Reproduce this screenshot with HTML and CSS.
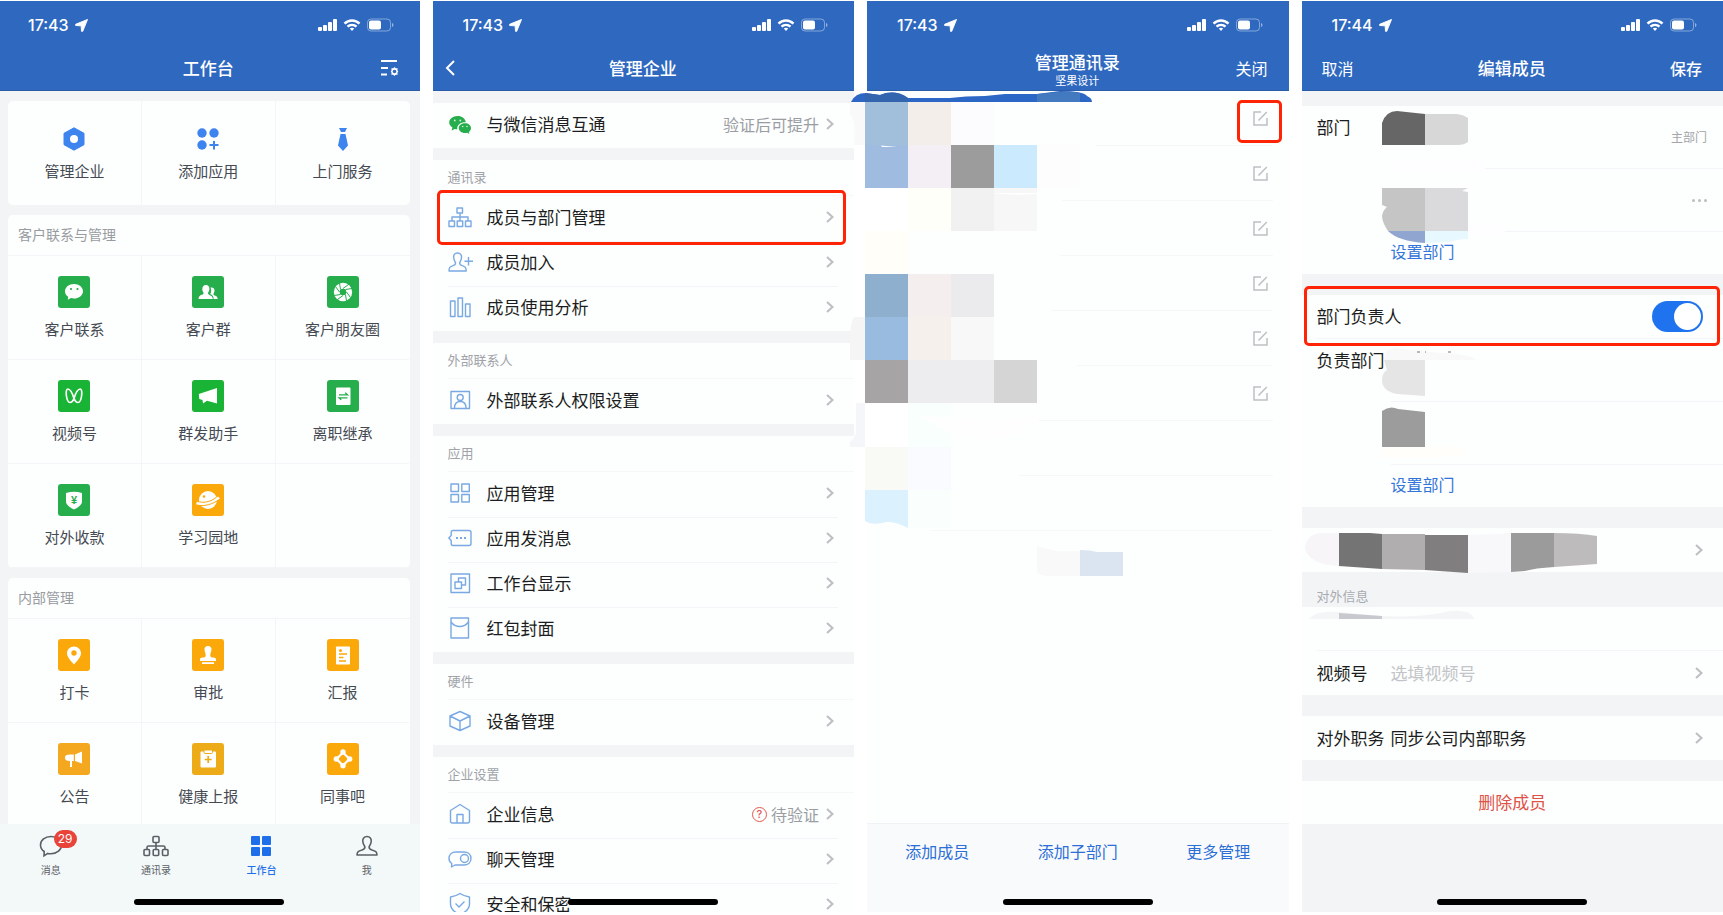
FILE: index.html
```html
<!DOCTYPE html>
<html lang="zh-CN">
<head>
    <meta charset="UTF-8">
    <title>企业微信 部门负责人设置</title>
    <link rel="stylesheet" href="styles.css">
</head>
<body>
    <!-- shared icons -->
    <svg class="sprite" aria-hidden="true">
        <symbol id="arrow" viewBox="0 0 14 14"><path d="M13.500.500 8.300 13.300H7L6.600 7.400.700 7V5.700z" fill="#fff" stroke="#fff" stroke-linejoin="round"/></symbol>
        <symbol id="signals" viewBox="0 0 76 14">
            <g fill="#fff">
                <rect x="0" y="9" width="4" height="4" rx="1"/>
                <rect x="5" y="7" width="4" height="6" rx="1"/>
                <rect x="10" y="4" width="4" height="9" rx="1"/>
                <rect x="15" y="1" width="4" height="12" rx="1"/>
            </g>
            <g fill="none" stroke="#fff" stroke-width="2.4">
                <path d="M26.5 5.600a10.500 10.500 0 0 1 15 0M29.500 8.700a6.400 6.400 0 0 1 9 0"/>
            </g>
            <path d="M31.800 10.600a3.400 3.400 0 0 1 4.400 0L34 13z" fill="#fff"/>
            <rect x="49.500" y="1" width="23" height="12" rx="3.500" fill="none" stroke="#fff" stroke-opacity=".4"/>
            <rect x="51" y="2.500" width="12" height="9" rx="2" fill="#fff"/>
            <path d="M74 5v4q1.500-.5 1.500-2T74 5z" fill="#fff" fill-opacity=".5"/>
        </symbol>
        <symbol id="chevron" viewBox="0 0 8 12"><path d="m1 1 5.500 5L1 11" fill="none" stroke="#bcbec2" stroke-width="2"/></symbol>
        <symbol id="edit" viewBox="0 0 15 15"><path d="M8 1H1v13h13V7M5.500 9.500 13.800 1" fill="none" stroke="#bdc0c3" stroke-width="1.500"/></symbol>
    </svg>

    <main class="board">
        <!-- workbench -->
        <section class="phone">
            <header class="topbar">
                <div class="status"><span class="time">17:43</span><svg class="loc"><use href="#arrow"/></svg><svg class="signals"><use href="#signals"/></svg></div>
                <div class="nav">
                    <h1>工作台</h1>
                    <button class="nav-right" aria-label="设置">
                        <svg width="18" height="16" viewBox="0 0 18 16" fill="none" stroke="#fff" stroke-width="2"><path d="M0 1h16M0 8h7M0 14.500h6"/><path d="m13.500 7 1.200 1.300 2-.1-.3 2 .9 1.300-.9 1.300.3 2-2-.1-1.200 1.300-1.200-1.300-2 .1.300-2-.9-1.300.9-1.300-.3-2 2 .1z" fill="#fff" stroke="none"/><circle cx="13.500" cy="11.500" r="1.800" fill="#2f69bf" stroke="none"/></svg>
                    </button>
                </div>
            </header>
            <div class="content home">
                <div class="card quick">
                    <div class="cells">
                        <button class="cell"><svg class="mark" viewBox="0 0 24 24"><path d="M12 .8 22 6.300v11.400L12 23.200 2 17.700V6.300z" fill="#3d84ef" stroke="#3d84ef" stroke-linejoin="round"/><circle cx="12" cy="12" r="4" fill="#fff"/></svg>管理企业</button>
                        <button class="cell"><svg class="mark" viewBox="0 0 24 24" fill="#3d84ef"><circle cx="6" cy="6" r="4.700"/><circle cx="18" cy="6" r="4.700"/><circle cx="6" cy="18" r="4.700"/><path d="M17 14h2v3h3.500v2H19v3.500h-2V19h-3.500v-2H17z"/></svg>添加应用</button>
                        <button class="cell"><svg class="mark" viewBox="0 0 24 24" fill="#3d84ef"><path d="M8 1h8l-2 4h-4zM9.500 7h5L17 18.500 12 24l-5-5.500z"/></svg>上门服务</button>
                    </div>
                </div>
                <div class="card">
                    <h2>客户联系与管理</h2>
                    <div class="cells">
                        <button class="cell"><svg class="tile green" viewBox="0 0 32 32"><path d="M16 8c5 0 9 3.200 9 7.200s-4 7.300-9 7.300c-1 0-2-.1-3-.4L9.800 23.800l.4-3C8.200 19.500 7 17.500 7 15.200 7 11.200 11 8 16 8z" fill="#fff"/><circle cx="13" cy="13" r="1.100" fill="#26ad4c"/><circle cx="19.500" cy="13" r="1.100" fill="#26ad4c"/></svg>客户联系</button>
                        <button class="cell"><svg class="tile green" viewBox="0 0 32 32" fill="#fff"><path d="M14 9c2.400 0 3.600 1.800 3.400 4.200-.1 1.600-.8 2.500-1.300 3.300-.3 1.400.3 1.900 1.500 2.400 2 .8 3 1.600 3.200 4.100H6.500c.2-2.700 1.200-3.400 3.300-4.200 1.300-.5 2-.9 1.700-2.300-.5-.8-1.200-1.700-1.200-3.300C10.200 10.800 11.600 9 14 9z"/><path d="M18.500 11.500c3-.5 4.200 1.300 4 3.500-.1 1.300-.6 2-1 2.700-.2 1.100.3 1.400 1.300 1.800 1.900.8 2.700 1.500 2.900 3.500h-4c-.2-2.600-1.300-3.900-3.500-4.900 1.200-2 1.400-4.500.3-6.600z"/></svg>客户群</button>
                        <button class="cell"><svg class="tile green" viewBox="0 0 32 32"><circle cx="16" cy="16" r="9.200" fill="#fff"/><circle cx="16" cy="16" r="3.300" fill="#26ad4c"/><path d="m16 12.500 5.500-4M18.500 13.500l6.600-1M19.500 16l4 5.500M18.500 18.500l1 6.500M16 19.500l-5.500 4M13.500 18.500l-6.600 1M12.500 16l-4-5.500M13.500 13.500l-1-6.500" stroke="#26ad4c" stroke-width="1"/></svg>客户朋友圈</button>
                        <button class="cell"><svg class="tile bright" viewBox="0 0 32 32"><path d="M16 18.500C14.500 13.500 12.300 9 9.800 9c-3 0-1.500 13.500 2.200 13.500 1.600 0 3-1.600 4-4C17.500 13.500 19.700 9 22.200 9c3 0 1.500 13.500-2.200 13.500-1.600 0-3-1.600-4-4z" fill="none" stroke="#fff" stroke-width="1.700"/></svg>视频号</button>
                        <button class="cell"><svg class="tile bright" viewBox="0 0 32 32"><path d="M25 8v15.500l-10-2.800L11 23.500l-.5-3.500-3.200-1-.5-5z" fill="#fff"/></svg>群发助手</button>
                        <button class="cell"><svg class="tile green" viewBox="0 0 32 32"><rect x="9" y="7.500" width="14.500" height="17.500" rx="1" fill="#fff"/><path d="M12 14.800h8.500l-2.300-2M20.500 17.800H12l2.300 2" fill="none" stroke="#26ad4c" stroke-width="1.300"/></svg>离职继承</button>
                        <button class="cell"><svg class="tile green" viewBox="0 0 32 32"><path d="M8 9q8-2.500 16 0v8.500c0 3.500-4 6-8 8-4-2-8-4.500-8-8z" fill="#fff"/><text x="16" y="20" class="yen">¥</text></svg>对外收款</button>
                        <button class="cell"><svg class="tile orange" viewBox="0 0 32 32"><circle cx="16" cy="16" r="9" fill="#fff"/><path d="M4.500 19C12 22 22 18 27 13.500" fill="none" stroke="#fff" stroke-width="2.600"/><path d="M7.500 17.800C13 19.500 21 16.500 24.500 13" fill="none" stroke="#fba80a" stroke-width="1"/><path d="M6 21.300C13 22.500 21 19.800 26 16.300" fill="none" stroke="#fba80a" stroke-width="1"/><circle cx="12" cy="12.500" r="1.300" fill="#fba80a"/></svg>学习园地</button>
                        <span class="cell"></span>
                    </div>
                </div>
                <div class="card">
                    <h2>内部管理</h2>
                    <div class="cells">
                        <button class="cell"><svg class="tile orange" viewBox="0 0 32 32"><path d="M16 7.500c4 0 7 3 7 6.800 0 4.200-4.500 8.200-7 11.200-2.500-3-7-7-7-11.200 0-3.800 3-6.800 7-6.800z" fill="#fff"/><circle cx="16" cy="14" r="2.700" fill="#fba80a"/></svg>打卡</button>
                        <button class="cell"><svg class="tile orange" viewBox="0 0 32 32" fill="#fff"><path d="M16 7c2.400 0 3.700 1.600 3.500 4-.2 2-1.200 3-1.200 5.500 0 1.500 1 2 3 2 2.400 0 3 .8 2.700 3.500H8c-.3-2.700.3-3.500 2.700-3.500 2 0 3-.5 3-2 0-2.500-1-3.500-1.200-5.500-.2-2.400 1.100-4 3.500-4z"/><path d="M10 23.300h12V25H10z"/></svg>审批</button>
                        <button class="cell"><svg class="tile orange" viewBox="0 0 32 32"><rect x="9" y="7.500" width="14" height="18" rx=".8" fill="#fff"/><circle cx="13.500" cy="11.500" r="1.500" fill="#fba80a"/><path d="M12 15h8M12 18.500h4.500M12 22h7" stroke="#fba80a" stroke-width="1.300"/></svg>汇报</button>
                        <button class="cell"><svg class="tile amber" viewBox="0 0 32 32" fill="#fff"><path d="M24 8.500v12l-7-2.500v-6.500zM15.800 11.500V18H14v6h-2v-6c-3.500 0-5-1-5-3.300 0-2.200 1.500-3.200 5-3.200z"/></svg>公告</button>
                        <button class="cell"><svg class="tile mustard" viewBox="0 0 32 32"><rect x="8.500" y="8.500" width="15.500" height="16" rx="1" fill="#fff"/><path d="M12 7h8.500v2.500q0 1-1 1h-6.500q-1 0-1-1z" fill="#fff" stroke="#ecab17"/><path d="M16.200 13v7M12.700 16.500h7" stroke="#ecab17" stroke-width="1.700"/></svg>健康上报</button>
                        <button class="cell"><svg class="tile orange" viewBox="0 0 32 32"><path d="m16 9.500 6.500 6.500-6.500 6.500L9.500 16z" fill="none" stroke="#fff" stroke-width="2.200"/><g fill="#fff"><circle cx="16" cy="9" r="2.700"/><circle cx="22.700" cy="16" r="2.700"/><circle cx="16" cy="22.700" r="2.700"/><circle cx="9.300" cy="16" r="2.700"/></g></svg>同事吧</button>
                    </div>
                </div>
            </div>
            <nav class="tabbar">
                <a href="#"><span class="tab-icon"><svg width="24" height="22" viewBox="0 0 24 22" fill="none" stroke="#5b6066" stroke-width="1.600"><path d="M12 1.500c6 0 10.500 3.700 10.500 8.500S18 18.800 12 18.800c-1.200 0-2.300-.1-3.300-.4L5 20.800l.2-4.300C2.800 14.900 1.500 12.600 1.500 10 1.500 5.200 6 1.500 12 1.500z"/></svg><b class="badge">29</b></span>消息</a>
                <a href="#"><span class="tab-icon"><svg width="26" height="22" viewBox="0 0 26 22" fill="none" stroke="#5b6066" stroke-width="1.600"><rect x="10" y="1.500" width="6" height="6" rx="1"/><path d="M13 8v3M4 14v-1.500q0-1.500 1.500-1.500h15q1.500 0 1.500 1.500V14M13 11v3"/><rect x="1" y="14.500" width="5.500" height="6" rx="1"/><rect x="10.200" y="14.500" width="5.500" height="6" rx="1"/><rect x="19.500" y="14.500" width="5.500" height="6" rx="1"/></svg></span>通讯录</a>
                <a href="#" class="active"><span class="tab-icon"><svg width="20" height="20" viewBox="0 0 20 20" fill="#1f6feb"><rect width="9" height="9" rx="1"/><rect x="11" width="9" height="9" rx="1"/><rect y="11" width="9" height="9" rx="1"/><rect x="11" y="11" width="9" height="9" rx="1"/></svg></span>工作台</a>
                <a href="#"><span class="tab-icon"><svg width="24" height="22" viewBox="0 0 24 22" fill="none" stroke="#5b6066" stroke-width="1.600" stroke-linejoin="round"><path d="M12 1.500c3 0 4.500 2.200 4.200 5-.2 2.400-1.200 3.500-2 5-.5 1.800.5 2.700 2.800 3.500 3.500 1 5 1.800 5 5H2c0-3.200 1.500-4 5-5 2.300-.8 3.300-1.700 2.800-3.500-.8-1.500-1.800-2.600-2-5-.3-2.800 1.200-5 4.200-5z"/></svg></span>我</a>
            </nav>
            <div class="home-bar"></div>
        </section>

        <!-- company management -->
        <section class="phone">
            <header class="topbar">
                <div class="status"><span class="time">17:43</span><svg class="loc"><use href="#arrow"/></svg><svg class="signals"><use href="#signals"/></svg></div>
                <div class="nav">
                    <button class="nav-back" aria-label="返回"><svg width="10" height="16" viewBox="0 0 10 16"><path d="M9 1 2 8l7 7" fill="none" stroke="#fff" stroke-width="2"/></svg></button>
                    <h1>管理企业</h1>
                </div>
            </header>
            <div class="content manage">
                <div class="group">
                    <a class="row" href="#"><svg class="row-icon" viewBox="0 0 24 24" fill="#26ad4c"><path d="M9.500 4c4.500 0 7.900 2.700 8.300 6.200-4.800-.3-8.600 2.400-8.600 6.300l.1.800c-1 0-1.800-.1-2.500-.4L3.600 18.500l.8-2.900C2.600 14.500 1.200 12.600 1.200 10.600 1.200 7 4.800 4 9.500 4z"/><path d="M17 11.200c3.500 0 6 2.100 6 5 0 1.500-.8 2.800-2.200 3.800l.5 2-2.200-1.200c-.7.200-1.400.3-2.100.3-3.500 0-6.300-2.200-6.300-5s2.800-4.900 6.300-4.900z"/><g fill="#fff" fill-opacity=".8"><circle cx="6.800" cy="8.500" r=".9"/><circle cx="12.300" cy="8.500" r=".9"/><circle cx="14.700" cy="14.500" r=".8"/><circle cx="19" cy="14.500" r=".8"/></g></svg><span class="row-text">与微信消息互通</span><span class="row-value">验证后可提升</span><svg class="chev"><use href="#chevron"/></svg></a>
                </div>
                <div class="group">
                    <h2>通讯录</h2>
                    <a class="row marked" href="#"><svg class="row-icon" viewBox="0 0 24 24"><rect x="9" y="3" width="5.500" height="5"/><path d="M12 8v4M4 16v-4h16v4M12 12v4"/><rect x="1" y="16" width="5.500" height="5.500"/><rect x="9.200" y="16" width="5.500" height="5.500"/><rect x="17.500" y="16" width="5.500" height="5.500"/></svg><span class="row-text">成员与部门管理</span><svg class="chev"><use href="#chevron"/></svg></a>
                    <a class="row" href="#"><svg class="row-icon" viewBox="0 0 24 24"><path d="M9.500 3c3 0 4.300 2 4 4.800-.2 2.400-1 3.300-1.800 4.700-.4 1.800.5 2.500 2.500 3.200 3 1 4 1.700 4 5.300H1c0-3.600 1-4.300 4-5.300 2-.7 2.900-1.400 2.500-3.200-.8-1.400-1.600-2.300-1.800-4.700C5.300 5 6.600 3 9.500 3zM20.500 7v8.500M16.500 11.200H25"/></svg><span class="row-text">成员加入</span><svg class="chev"><use href="#chevron"/></svg></a>
                    <a class="row" href="#"><svg class="row-icon" viewBox="0 0 24 24"><rect x="2.500" y="6" width="4.500" height="15.500"/><rect x="10" y="3" width="4.500" height="18.500"/><rect x="17.500" y="9" width="4.500" height="12.500"/></svg><span class="row-text">成员使用分析</span><svg class="chev"><use href="#chevron"/></svg></a>
                </div>
                <div class="group">
                    <h2>外部联系人</h2>
                    <a class="row" href="#"><svg class="row-icon" viewBox="0 0 24 24"><rect x="3" y="3.500" width="18.500" height="17"/><circle cx="12.200" cy="9.500" r="3"/><path d="M6.500 20c0-4.500 2.200-6.500 5.700-6.500s5.800 2 5.800 6.500"/></svg><span class="row-text">外部联系人权限设置</span><svg class="chev"><use href="#chevron"/></svg></a>
                </div>
                <div class="group">
                    <h2>应用</h2>
                    <a class="row" href="#"><svg class="row-icon" viewBox="0 0 24 24"><rect x="3" y="3" width="7.500" height="7.500"/><rect x="13.800" y="3" width="7.500" height="7.500"/><rect x="3" y="13.500" width="7.500" height="7.500"/><rect x="13.800" y="13.500" width="7.500" height="7.500"/></svg><span class="row-text">应用管理</span><svg class="chev"><use href="#chevron"/></svg></a>
                    <a class="row" href="#"><svg class="row-icon" viewBox="0 0 24 24"><path d="M5 4.500h16q2 0 2 2v11q0 2-2 2H5q-1.800 0-1.800-2v-3L.8 12l2.400-2.500v-3q0-2 1.800-2z"/><path d="M8 12h2M12 12h2M16 12h2" stroke-width="2"/></svg><span class="row-text">应用发消息</span><svg class="chev"><use href="#chevron"/></svg></a>
                    <a class="row" href="#"><svg class="row-icon" viewBox="0 0 24 24"><rect x="3" y="3" width="18.500" height="18.500"/><rect x="7" y="11" width="6.500" height="6.500"/><path d="M10.500 11V7H17.500v7h-4"/></svg><span class="row-text">工作台显示</span><svg class="chev"><use href="#chevron"/></svg></a>
                    <a class="row" href="#"><svg class="row-icon" viewBox="0 0 24 24"><rect x="3" y="2" width="17.500" height="20"/><path d="M3 6c4.500 6 13 6 17.500 0"/></svg><span class="row-text">红包封面</span><svg class="chev"><use href="#chevron"/></svg></a>
                </div>
                <div class="group">
                    <h2>硬件</h2>
                    <a class="row" href="#"><svg class="row-icon" viewBox="0 0 24 24"><path d="m12 2.500 10 4.500v10l-10 4.500L2 17V7zM2 7l10 5 10-5M12 12v9.500"/></svg><span class="row-text">设备管理</span><svg class="chev"><use href="#chevron"/></svg></a>
                </div>
                <div class="group">
                    <h2>企业设置</h2>
                    <a class="row" href="#"><svg class="row-icon" viewBox="0 0 24 24"><path d="M12 2.500 21.500 8.500V19q0 2-2 2H4.500q-2 0-2-2V8.500zM9 21v-8.500h6V21"/></svg><span class="row-text">企业信息</span><i class="warn">?</i><span class="row-value">待验证</span><svg class="chev"><use href="#chevron"/></svg></a>
                    <a class="row" href="#"><svg class="row-icon" viewBox="0 0 24 24"><path d="M8 5h8c4 0 7 2.500 7 6.500S20 18 16 18H7l-3.500 2 .3-3.500C2 15.500 1 13.500 1 11.500 1 7.500 4 5 8 5z"/><circle cx="16.500" cy="11.500" r="4"/></svg><span class="row-text">聊天管理</span><svg class="chev"><use href="#chevron"/></svg></a>
                    <a class="row" href="#"><svg class="row-icon" viewBox="0 0 24 24"><path d="M12 1.500c3 2 6 3 9.500 3.500v7c0 5-4.500 8.500-9.500 10.500-5-2-9.500-5.500-9.500-10.500V5C6 4.500 9 3.500 12 1.500z"/><path d="m7.500 11.500 3.500 3.500 5.500-5.500"/></svg><span class="row-text">安全和保密</span><svg class="chev"><use href="#chevron"/></svg></a>
                </div>
            </div>
            <div class="home-bar"></div>
        </section>

        <!-- contacts -->
        <section class="phone">
            <header class="topbar">
                <div class="status"><span class="time">17:43</span><svg class="loc"><use href="#arrow"/></svg><svg class="signals"><use href="#signals"/></svg></div>
                <div class="nav">
                    <h1>管理通讯录<small>坚果设计</small></h1>
                    <button class="nav-right">关闭</button>
                </div>
            </header>
            <div class="content contacts">
                <div class="entry"><button class="edit-btn marked" aria-label="编辑"><svg><use href="#edit"/></svg></button></div>
                <div class="entry"><button class="edit-btn" aria-label="编辑"><svg><use href="#edit"/></svg></button></div>
                <div class="entry"><button class="edit-btn" aria-label="编辑"><svg><use href="#edit"/></svg></button></div>
                <div class="entry"><button class="edit-btn" aria-label="编辑"><svg><use href="#edit"/></svg></button></div>
                <div class="entry"><button class="edit-btn" aria-label="编辑"><svg><use href="#edit"/></svg></button></div>
                <div class="entry"><button class="edit-btn" aria-label="编辑"><svg><use href="#edit"/></svg></button></div>
                <div class="entry"></div>
                <div class="entry"></div>
            </div>
            <div class="actions">
                <button>添加成员</button>
                <button>添加子部门</button>
                <button>更多管理</button>
            </div>
            <div class="home-bar"></div>
            <!-- blurred names -->
            <svg class="mosaic contacts-mosaic" width="300" height="500" viewBox="850 90 300 500" aria-hidden="true">
                <path d="M867 103H1095V150H1062V215H1015V250H1060V262H1051V320H1062L1077 362V375H1050L1040 405H930V440H1019V480L930 525V540H867z" fill="#fdfefe"/>
                <path d="M851 102Q855 93 866 93L880 95Q895 89 908 98H950Q965 96 985 96L1005 94H1037L1060 91Q1083 91 1087 96Q1092 98 1092 102z" fill="#2d67c6"/>
                <path d="M865 93 880 95Q895 89 908 98V102H865z" fill="#3265ae"/>
                <path d="M1037 94 1060 92Q1073 91 1080 93V102H1037z" fill="#4279bf"/>
                <path d="M850 102h15v43h-11q2-28-4-30z" fill="#f9f9f9"/>
                <path d="M855 317h10v43h-15v-20q0-20 5-23z" fill="#f5f5f5"/>
                <path d="M856 403h9v44h-15v-5q6-4 6-12z" fill="#f5f6f9"/>
                <g shape-rendering="crispEdges">
                    <path d="M865 102h43v43h-43z" fill="#a1bfda"/>
                    <path d="M908 102h43v43h-43z" fill="#f3eee9"/>
                    <path d="M951 102h43v43h-43z" fill="#fcfbfe"/>
                    <path d="M865 145h43v43h-43z" fill="#9fbbe0"/>
                    <path d="M908 145h43v43h-43z" fill="#f3eff4"/>
                    <path d="M951 145h43v43h-43z" fill="#9c9c9c"/>
                    <path d="M994 145h43v43h-43z" fill="#cbeafe"/>
                    <path d="M1037 145h43v43h-43z" fill="#fefdfe"/>
                    <path d="M865 188h43v43h-43z" fill="#ffffff"/>
                    <path d="M908 188h43v43h-43z" fill="#fffffa"/>
                    <path d="M951 188h43v43h-43z" fill="#f1f1f2"/>
                    <path d="M994 188h43v43h-43z" fill="#f7f7f8"/>
                    <path d="M865 231h43v43h-43z" fill="#fffef9"/>
                    <path d="M865 274h43v43h-43z" fill="#8eafcd"/>
                    <path d="M908 274h43v43h-43z" fill="#f4efee"/>
                    <path d="M951 274h43v43h-43z" fill="#ebebee"/>
                    <path d="M865 317h43v43h-43z" fill="#99bbe0"/>
                    <path d="M908 317h43v43h-43z" fill="#f6f0ec"/>
                    <path d="M951 317h43v43h-43z" fill="#f8f8f8"/>
                    <path d="M865 360h43v43h-43z" fill="#a6a4a5"/>
                    <path d="M908 360h86v43h-86z" fill="#ededef"/>
                    <path d="M994 360h43v43h-43z" fill="#d5d5d5"/>
                    <path d="M865 403h43v44h-43z" fill="#ffffff"/>
                    <path d="M908 403h43v44h-43z" fill="#f9fffd"/>
                    <path d="M865 447h43v43h-43z" fill="#f9faf5"/>
                    <path d="M908 447h43v43h-43z" fill="#fafbff"/>
                    <path d="M908 490h43v38h-43z" fill="#fafffe"/>
                </g>
                <path d="M881 145.500 897 147 882 147z" fill="#fff"/>
                <path d="M992 193h45v1q-25 2-45-1z" fill="#fff"/>
                <path d="M920 416q80 4 125 0-30 24-60 24t-65-24z" fill="#fefefe"/>
                <path d="M865 490h43v38q-13-7-21-6-15 4-22-1z" fill="#dcf1fe"/>
                <path d="M1037 546q11 3 20 5h23v25h-34q-6-1-9-3z" fill="#f9f9f9"/>
                <path d="M1080 550q10 0 17 2h26v24h-43z" fill="#dbe5f1"/>
            </svg>
        </section>

        <!-- edit member -->
        <section class="phone">
            <header class="topbar">
                <div class="status"><span class="time">17:44</span><svg class="loc"><use href="#arrow"/></svg><svg class="signals"><use href="#signals"/></svg></div>
                <div class="nav">
                    <button class="nav-left">取消</button>
                    <h1>编辑成员</h1>
                    <button class="nav-right save">保存</button>
                </div>
            </header>
            <form class="content member" onsubmit="return false;">
                <div class="dept">
                    <span class="dept-label">部门</span>
                    <div class="dept-list">
                        <div class="dept-item"><small>主部门</small></div>
                        <div class="dept-item"><button class="more" aria-label="更多"><i></i><i></i><i></i></button></div>
                        <a href="#" class="set-dept">设置部门</a>
                    </div>
                </div>
                <div class="field switch-field marked">
                    <label for="leader">部门负责人</label>
                    <input type="checkbox" id="leader" class="switch" checked>
                </div>
                <div class="dept">
                    <span class="dept-label">负责部门</span>
                    <div class="dept-list">
                        <div class="dept-item"></div>
                        <div class="dept-item"></div>
                        <a href="#" class="set-dept">设置部门</a>
                    </div>
                </div>
                <div class="field"><svg class="chev"><use href="#chevron"/></svg></div>
                <h2>对外信息</h2>
                <div class="field flush lined"></div>
                <div class="field flush">
                    <label for="channel">视频号</label>
                    <input type="text" id="channel" placeholder="选填视频号">
                    <svg class="chev"><use href="#chevron"/></svg>
                </div>
                <div class="field">
                    <label for="job">对外职务</label>
                    <input type="text" id="job" value="同步公司内部职务">
                    <svg class="chev"><use href="#chevron"/></svg>
                </div>
                <button class="delete">删除成员</button>
            </form>
            <div class="home-bar"></div>
            <!-- blurred department names -->
            <svg class="mosaic member-mosaic" width="300" height="530" viewBox="1302 100 300 530" aria-hidden="true">
                <path d="M1390 160H1485V172H1390zM1390 225H1505V235H1390z" fill="#fefdff"/>
                <path d="M1382 145V123Q1386 111 1397 111L1425 114V145z" fill="#666"/>
                <path d="M1425 114H1457Q1464 115 1468 118V142Q1464 145 1458 145H1425z" fill="#d7d7d7"/>
                <path d="M1382 188H1425V231H1388Q1382 222 1382 216 1383 210 1387 207L1382 205z" fill="#c5c5c6"/>
                <path d="M1425 188H1468L1462 191 1468 192V231H1425z" fill="#dad9dc"/>
                <path d="M1388 231H1425V243Q1398 241 1388 231z" fill="#91a5d1"/>
                <path d="M1425 231H1468V239Q1458 239 1450 242L1425 243z" fill="#e7f8ff"/>
                <path d="M1384 360 1386 352Q1394 345 1402 349L1440 353Q1470 354 1476 360z" fill="#f9f9f9"/>
                <path d="M1417 352h3M1425 352h1M1448 352h3" stroke="#777"/>
                <path d="M1384 360H1425V396L1397 394Q1382 391 1382 380 1382 373 1387 370z" fill="#e5e5e5"/>
                <path d="M1382 447V411Q1390 405 1398 409L1425 412V447z" fill="#9c9c9c"/>
                <path d="M1382 447H1465V455Q1425 460 1382 457z" fill="#fffefa"/>
                <path d="M1339 533H1320Q1306 535 1305 548 1308 564 1339 566z" fill="#f7f5f7"/>
                <path d="M1339 533H1370L1382 534V569L1339 566z" fill="#747474"/>
                <path d="M1382 534H1425V570L1382 569z" fill="#b0aeaf"/>
                <path d="M1425 535H1468V573L1425 570z" fill="#807e7e"/>
                <path d="M1468 535 1500 534 1511 532V572L1468 573z" fill="#f8f8fb"/>
                <path d="M1511 533H1554V567Q1535 568 1525 571L1511 572z" fill="#9b9b9b"/>
                <path d="M1554 533Q1580 533 1597 536V564L1554 567z" fill="#bdbbbc"/>
                <path d="M1309 619Q1316 610 1339 612L1382 616Q1425 618 1450 611 1470 609 1475 619z" fill="#f3f5f7"/>
                <path d="M1339 613 1382 616V619H1339z" fill="#c8c9ce"/>
            </svg>
        </section>
    </main>
</body>
</html>
```

FILE: styles.css
```css
* {
    box-sizing: border-box;
}

body {
    margin: 0;
    background: #fff;
    color: #1b1d20;
    font-family: "Noto Sans CJK SC", sans-serif;
    font-size: 17px;
    line-height: 24px;
    overflow: hidden;
}

button,
input {
    padding: 0;
    border: none;
    background: none;
    color: inherit;
    font: inherit;
}

a {
    color: inherit;
    text-decoration: none;
}

h1,
h2 {
    margin: 0;
    font-weight: normal;
}

.sprite {
    position: absolute;
    width: 0;
    height: 0;
}

.board {
    display: grid;
    grid-template-columns: repeat(4, 1fr);
    gap: 13px;
    height: 100vh;
    margin-left: -2px;
    padding: 1px 0 3px;
}

.phone {
    position: relative;
    display: flex;
    flex-direction: column;
    min-width: 0;
    min-height: 0;
    background: #f2f4f6;
}

.content {
    flex: 1;
    min-height: 0;
    overflow: hidden;
}

/* top bar */
.topbar {
    background: #2f69bf;
    border-bottom: 1px solid #2a5ca8;
    color: #fff;
}

.status {
    display: flex;
    align-items: center;
    height: 48px;
    padding: 0 26px 0 30px;
}

.time {
    font-family: Inter, sans-serif;
    font-size: 16px;
    font-weight: 500;
}

.loc {
    width: 13px;
    height: 13px;
    margin-left: 6px;
}

.signals {
    width: 76px;
    height: 14px;
    margin-left: auto;
}

.nav {
    display: grid;
    grid-template-columns: 1fr auto 1fr;
    align-items: center;
    height: 41px;
    padding: 0 21px 3px 20px;
}

.nav h1 {
    grid-column: 2;
    grid-row: 1;
    font-size: 17px;
    font-weight: 500;
    text-align: center;
}

.nav h1 small {
    display: block;
    font-size: 11px;
    font-weight: 400;
    line-height: 13px;
}

.nav button {
    grid-row: 1;
    font-size: 16px;
}

.nav button svg {
    display: block;
}

.nav-left,
.nav-back {
    grid-column: 1;
    justify-self: start;
}

.nav-back {
    margin-left: -8px;
}

.nav-right {
    grid-column: 3;
    justify-self: end;
}

.save {
    font-weight: 500;
}

/* workbench */
.home {
    display: flex;
    flex-direction: column;
    gap: 10px;
    padding: 10px 10px 0;
}

.card {
    flex: none;
    overflow: hidden;
    background: #fdfefe;
    border-radius: 5px;
}

.card h2 {
    padding: 7px 10px 9px;
    border-bottom: 1px solid #f3f6f9;
    color: #989ba0;
    font-size: 14px;
}

.cells {
    display: grid;
    grid-template-columns: repeat(3, 1fr);
}

.cell {
    display: flex;
    flex-direction: column;
    align-items: center;
    height: 104px;
    padding-top: 20px;
    border-right: 1px solid #f3f6f9;
    border-bottom: 1px solid #f3f6f9;
    color: #454a52;
    font-size: 15px;
    line-height: 20px;
}

.cell:nth-child(3n) {
    border-right: none;
}

.quick .cell {
    padding-top: 26px;
    border-bottom: none;
}

.mark {
    width: 24px;
    height: 24px;
    margin-bottom: 10px;
}

.tile {
    width: 32px;
    height: 32px;
    margin-bottom: 11px;
    border-radius: 3px;
}

.green {
    background: #26ad4c;
}

.bright {
    background: #19b335;
}

.orange {
    background: #fba80a;
}

.amber {
    background: #f3a81f;
}

.mustard {
    background: #ecab17;
}

.yen {
    fill: #26ad4c;
    font-family: "Liberation Sans", sans-serif;
    font-size: 11px;
    font-weight: bold;
    text-anchor: middle;
}

.tabbar {
    display: grid;
    grid-template-columns: repeat(4, 1fr);
    height: 88px;
    background: #f3f9f9;
    color: #5b6066;
    font-size: 10px;
    line-height: 16px;
    text-align: center;
}

.tab-icon {
    position: relative;
    display: flex;
    align-items: center;
    justify-content: center;
    width: 26px;
    height: 22px;
    margin: 11px auto 5px;
}

.tabbar .active {
    color: #1f6feb;
    font-weight: 500;
}

.badge {
    position: absolute;
    top: -5px;
    left: 16px;
    width: 23px;
    height: 18px;
    border-radius: 9px;
    background: #e8443a;
    color: #fff;
    font-family: Inter, sans-serif;
    font-size: 12px;
    font-weight: 400;
    line-height: 18px;
}

.home-bar {
    position: absolute;
    bottom: 7px;
    left: 50%;
    width: 150px;
    height: 6px;
    margin-left: -75px;
    border-radius: 3px;
    background: #000;
}

/* lists */
.group {
    margin-top: 12px;
    background: #fdfefe;
}

.group h2 {
    height: 36px;
    margin-left: 15px;
    border-bottom: 1px solid #f5f7f9;
    color: #a0a3a8;
    font-size: 13px;
    line-height: 33px;
}

.row {
    position: relative;
    display: flex;
    align-items: center;
    height: 45px;
    padding: 0 20px 3px 15px;
}

.row + .row::before {
    content: "";
    position: absolute;
    top: 0;
    left: 15px;
    right: 16px;
    height: 1px;
    background: #f3f6f8;
}

.row-icon {
    width: 24px;
    height: 24px;
    margin-right: 15px;
    overflow: visible;
}

.row-icon:not([fill]) {
    fill: none;
    stroke: #79a9e2;
    stroke-width: 1.4px;
    stroke-linejoin: round;
}

.row-text {
    flex: 1;
}

.row-value {
    color: #9a9da2;
    font-size: 16px;
}

.chev {
    flex: none;
    width: 8px;
    height: 12px;
    margin-left: 7px;
}

.warn {
    width: 15px;
    height: 15px;
    margin-right: 4px;
    border: 1px solid #e3594f;
    border-radius: 50%;
    color: #e3594f;
    font-family: Inter, sans-serif;
    font-size: 11px;
    font-style: normal;
    font-weight: 500;
    line-height: 13px;
    text-align: center;
}

/* red frames round the thing to tap */
.marked::after {
    content: "";
    position: absolute;
    border: 3px solid #ff2405;
    border-radius: 5px;
}

.row.marked::after {
    inset: -6px 8px -4px 4px;
}

/* contacts */
.contacts {
    background: #fdfefe;
}

.entry {
    display: flex;
    align-items: center;
    justify-content: flex-end;
    height: 55px;
    margin-right: 16px;
    padding-right: 5px;
    border-bottom: 1px solid #f5f8f8;
}

.edit-btn {
    position: relative;
}

.edit-btn svg {
    display: block;
    width: 15px;
    height: 15px;
}

.edit-btn.marked::after {
    inset: -11px -14px -17px -16px;
}

.actions {
    display: grid;
    grid-template-columns: repeat(3, 1fr);
    align-items: start;
    height: 89px;
    padding-top: 15px;
    border-top: 1px solid #f0f3f6;
    background: #f9fafc;
    color: #2c6fd6;
}

.actions button {
    font-size: 16px;
}

.mosaic {
    position: absolute;
    pointer-events: none;
}

.contacts-mosaic {
    top: 89px;
    left: -17px;
}

.member-mosaic {
    top: 99px;
    left: 0;
}

/* edit member */
.member {
    display: flex;
    flex-direction: column;
    padding-top: 15px;
}

.dept {
    display: flex;
    flex: none;
    padding-left: 15px;
    background: #fdfefe;
}

.dept-label {
    width: 74px;
    line-height: 42px;
    white-space: nowrap;
}

.dept-list {
    flex: 1;
}

.dept-item {
    display: flex;
    align-items: center;
    justify-content: flex-end;
    height: 63px;
    padding-right: 16px;
    border-bottom: 1px solid #f3f6f9;
}

.dept-item small {
    color: #a3a5a8;
    font-size: 12px;
}

.more {
    display: flex;
    gap: 3px;
}

.more i {
    width: 3px;
    height: 3px;
    border-radius: 50%;
    background: #bbbdc0;
}

.set-dept {
    display: block;
    padding-bottom: 3px;
    color: #3274d9;
    font-size: 16px;
    line-height: 39px;
}

.field {
    position: relative;
    display: flex;
    flex: none;
    align-items: center;
    height: 44px;
    margin-top: 21px;
    padding: 0 20px 0 15px;
    background: #fdfefe;
}

.field.flush {
    margin-top: 0;
}

.field label {
    width: 74px;
    white-space: nowrap;
}

.field input[type="text"] {
    flex: 1;
    min-width: 0;
}

.field input::placeholder {
    color: #c2c4c7;
}

.field .chev {
    margin-left: auto;
}

.lined::before,
.switch-field::before {
    content: "";
    position: absolute;
    bottom: 0;
    left: 15px;
    right: 0;
    height: 1px;
    background: #f3f6f9;
}

.field.switch-field {
    justify-content: space-between;
    padding-bottom: 2px;
}

.field.marked::after {
    inset: -9px 3px -7px 2px;
}

.switch {
    position: relative;
    appearance: none;
    width: 51px;
    height: 31px;
    margin: 0;
    border-radius: 16px;
    background: #1f73ee;
}

.switch::after {
    content: "";
    position: absolute;
    top: 2px;
    right: 2px;
    width: 27px;
    height: 27px;
    border-radius: 50%;
    background: #fff;
}

.member h2 {
    height: 35px;
    padding-left: 15px;
    color: #a8abaf;
    font-size: 13px;
    line-height: 47px;
}

.delete {
    flex: none;
    height: 43px;
    margin-top: 21px;
    padding-bottom: 2px;
    background: #fdfefe;
    color: #de5247;
}
```
